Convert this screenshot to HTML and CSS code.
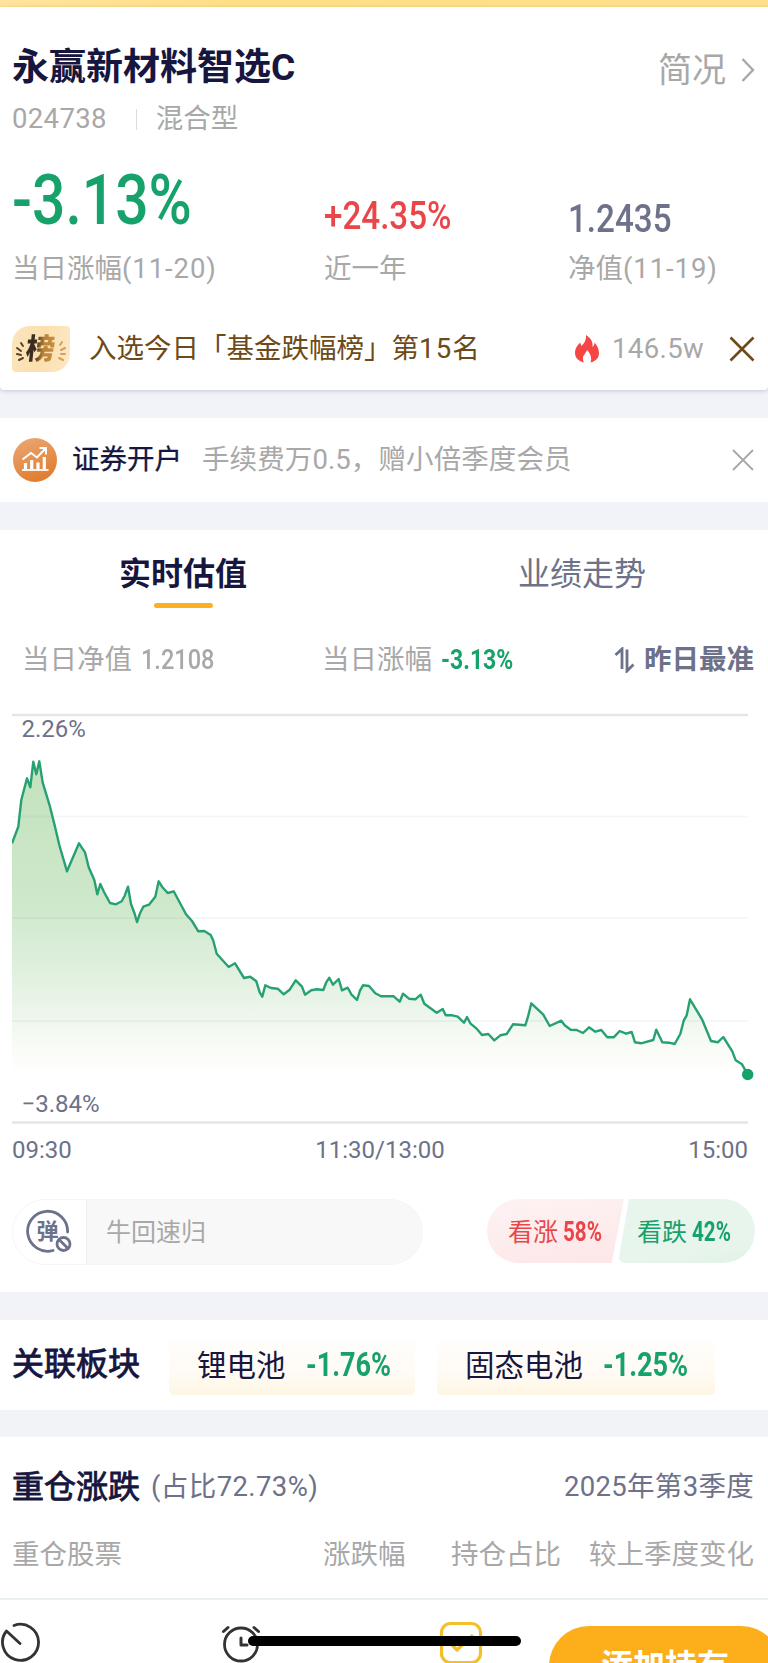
FILE: index.html
```html
<!DOCTYPE html>
<html lang="zh-CN">
<head>
    <meta charset="UTF-8">
    <meta name="viewport" content="width=device-width, initial-scale=1.0">
    <title>永赢新材料智选C</title>
    <link rel="stylesheet" href="styles.css">
</head>
<body>
    <div class="top-strip"></div>

    <section class="fund-header">
        <div class="title-row">
            <h1>永赢新材料智选C</h1>
            <a class="profile-link">简况
                <svg width="14" height="26" viewBox="0 0 14 26"><path d="M1.5 2 L12 13 L1.5 24"/></svg>
            </a>
        </div>
        <div class="meta-row">
            <span class="code">024738</span>
            <i class="meta-divider"></i>
            <span>混合型</span>
        </div>
        <div class="figures">
            <div class="figure">
                <div class="value big green"><span class="num">-3.13%</span></div>
                <div class="label">当日涨幅<span class="date">(11-20)</span></div>
            </div>
            <div class="figure">
                <div class="value red"><span class="num">+24.35%</span></div>
                <div class="label">近一年</div>
            </div>
            <div class="figure">
                <div class="value slate low"><span class="num">1.2435</span></div>
                <div class="label">净值<span class="date">(11-19)</span></div>
            </div>
        </div>
        <div class="rank-row">
            <div class="rank-badge">
                <svg width="58" height="46" viewBox="0 0 58 46">
                    <g fill="none" stroke-width="2" stroke-linecap="round">
                        <path stroke="#5a4128" d="M9 17 l2 3 M5 22 l4 3 M5 28 l4 1 M7 34 l4 -2"/>
                        <path stroke="#d3a05c" d="M50 16 l-2 3 M53 22 l-4 2 M53 28 l-4 0 M51 34 l-4 -2"/>
                    </g>
                </svg>
                <b>榜</b>
            </div>
            <span class="rank-text">入选今日「基金跌幅榜」第<span class="rank-no">15</span>名</span>
            <svg class="fire" width="24" height="28" viewBox="0 0 24 28">
                <path fill="#f54545" d="M11 0 C17 4 18 8 17.500 12 C19 11 19.500 9 19.500 7.500 C22 10 24 14 24 18 C24 23 20.500 26.500 15.500 27.500 C17 24 16 19 12 15 C11.500 18 7.500 20 8 24 C8 25.500 8.500 26.500 9 27.500 C4 26.500 0 23 0 18 C0 12 3.500 10 5 7.500 C6 9 6 10 6 11 C9 9 11.500 5 11 0 Z"/>
            </svg>
            <span class="heat">146.5w</span>
            <svg class="close-dark" width="26" height="26" viewBox="0 0 26 26"><path d="M1.500 1.500 L24.500 24.500 M24.500 1.500 L1.500 24.500"/></svg>
        </div>
    </section>

    <section class="broker-row">
        <svg width="44" height="44" viewBox="0 0 44 44">
            <defs>
                <linearGradient id="coin" x1="0.2" y1="0" x2="0.6" y2="1">
                    <stop offset="0" stop-color="#eba673"/>
                    <stop offset="1" stop-color="#e07c2d"/>
                </linearGradient>
            </defs>
            <circle cx="22" cy="22" r="22" fill="url(#coin)"/>
            <g fill="none" stroke="#fff">
                <path stroke-width="1.800" d="M9 32 H35.500"/>
                <path stroke-width="3.200" d="M12.500 31 V25 M18.700 31 V22 M25 31 V24.500 M31.300 31 V19"/>
                <path stroke-width="2" d="M9.500 21.500 L18 15 L24 19.500 L32.500 10.500 M26.500 10 H33 V16.500"/>
            </g>
        </svg>
        <span class="broker-name">证券开户</span>
        <span class="broker-desc">手续费万0.5，赠小倍季度会员</span>
        <svg class="close-light" width="22" height="22" viewBox="0 0 22 22"><path d="M1 1 L21 21 M21 1 L1 21"/></svg>
    </section>

    <section class="estimate">
        <div class="tabs">
            <div class="tab active">实时估值</div>
            <div class="tab">业绩走势</div>
        </div>
        <div class="stats">
            <div class="stat">当日净值 <span class="num">1.2108</span></div>
            <div class="stat">当日涨幅 <span class="num strong green">-3.13%</span></div>
            <div class="accuracy">
                <svg width="21" height="26" viewBox="0 0 21 26"><path d="M1.500 8 L8 2 V22 M13 2.500 V24 L19.500 17.500"/></svg>
                昨日最准
            </div>
        </div>
        <svg class="chart" width="744" height="416" viewBox="0 0 744 416">
            <defs>
                <linearGradient id="area" gradientUnits="userSpaceOnUse" x1="0" y1="50" x2="0" y2="364">
                    <stop offset="0" stop-color="#c3e2bd"/>
                    <stop offset="0.45" stop-color="#cde8ca"/>
                    <stop offset="0.75" stop-color="#e7f3e6"/>
                    <stop offset="0.9" stop-color="#f7fbf5"/>
                    <stop offset="1" stop-color="#ffffff"/>
                </linearGradient>
            </defs>
            <path fill="url(#area)" d="M0 364 L0 133.300 L6.300 116.700 L9.300 90 L15 68.300 L18.300 77.300 L21.300 51.700 L24.300 64.300 L27.300 51.300 L30.700 72.700 L38 96.700 L43 116.700 L47.300 135 L55 161.300 L67 133.300 L73 142.300 L76.700 157.300 L82.300 170 L85.300 184.300 L88.300 174 L92 182 L98 193 L104 194.300 L109.700 191.300 L112.700 185.700 L116 176.700 L119 194 L122.300 202.700 L125 212 L128 203.300 L131.300 196.700 L137 194.700 L143.300 186.700 L146.700 171.300 L150 176.700 L155.700 183 L161.700 181.300 L174 204.300 L180 211 L186.300 221.300 L192.300 221 L198.700 225 L201.300 230.700 L204.700 243.700 L216.700 257 L223 253.300 L232 268 L238.300 266.700 L244.300 271.300 L247.700 282.300 L250.300 286.700 L253.300 275.300 L259 278 L265.700 278.700 L271.700 284.300 L277.700 279.700 L283.700 270.300 L290 276.700 L293 284.700 L299.300 280.300 L304.700 279.300 L311.300 280 L314.300 272.300 L317.300 267.700 L321 274.700 L326.700 269 L330 280.300 L335.700 277.700 L339.300 284.300 L345 290 L348 280.700 L351 275.300 L357 276 L363.300 283.300 L369 286.300 L381.700 286.300 L387.700 291.700 L391 283.700 L397 288.700 L403.300 289.300 L408.700 284.700 L412.300 293.700 L424.700 302.700 L430.700 299 L433.700 305.300 L440.300 305.300 L445.700 306.700 L452 312.700 L455 307 L458.300 313.300 L464.300 318.300 L470 325 L476.300 324 L482.300 330.300 L488.300 325.300 L494.700 324 L501 314.300 L513.300 315.300 L516 306.700 L519.300 293.300 L531.300 304.700 L537.700 316 L549.300 310.700 L552.700 315.300 L558.700 319.700 L564.700 320 L571 323 L577 317.300 L583.300 321.700 L589.300 320 L595.300 327.300 L601.700 327.300 L607.700 321 L614 323.700 L619.700 322 L623 332.300 L629 333.300 L641.300 330 L644.300 319.700 L650.300 332.300 L657 332.700 L662.700 334 L668.300 324 L671.700 310.700 L674.700 305.300 L678 289.300 L690 309.300 L699 331 L705.700 332.300 L711.300 327 L720.300 341.300 L723.700 350.300 L730 354.300 L735.700 364 Z"/>
            <path class="grid edge" d="M0 5 H736 M0 412.500 H736"/>
            <path class="grid" d="M0 106.500 H736 M0 208 H736 M0 311 H736"/>
            <polyline class="line" points="0,133.300 6.300,116.700 9.300,90 15,68.300 18.300,77.300 21.300,51.700 24.300,64.300 27.300,51.300 30.700,72.700 38,96.700 43,116.700 47.300,135 55,161.300 67,133.300 73,142.300 76.700,157.300 82.300,170 85.300,184.300 88.300,174 92,182 98,193 104,194.300 109.700,191.300 112.700,185.700 116,176.700 119,194 122.300,202.700 125,212 128,203.300 131.300,196.700 137,194.700 143.300,186.700 146.700,171.300 150,176.700 155.700,183 161.700,181.300 174,204.300 180,211 186.300,221.300 192.300,221 198.700,225 201.300,230.700 204.700,243.700 216.700,257 223,253.300 232,268 238.300,266.700 244.300,271.300 247.700,282.300 250.300,286.700 253.300,275.300 259,278 265.700,278.700 271.700,284.300 277.700,279.700 283.700,270.300 290,276.700 293,284.700 299.300,280.300 304.700,279.300 311.300,280 314.300,272.300 317.300,267.700 321,274.700 326.700,269 330,280.300 335.700,277.700 339.300,284.300 345,290 348,280.700 351,275.300 357,276 363.300,283.300 369,286.300 381.700,286.300 387.700,291.700 391,283.700 397,288.700 403.300,289.300 408.700,284.700 412.300,293.700 424.700,302.700 430.700,299 433.700,305.300 440.300,305.300 445.700,306.700 452,312.700 455,307 458.300,313.300 464.300,318.300 470,325 476.300,324 482.300,330.300 488.300,325.300 494.700,324 501,314.300 513.300,315.300 516,306.700 519.300,293.300 531.300,304.700 537.700,316 549.300,310.700 552.700,315.300 558.700,319.700 564.700,320 571,323 577,317.300 583.300,321.700 589.300,320 595.300,327.300 601.700,327.300 607.700,321 614,323.700 619.700,322 623,332.300 629,333.300 641.300,330 644.300,319.700 650.300,332.300 657,332.700 662.700,334 668.300,324 671.700,310.700 674.700,305.300 678,289.300 690,309.300 699,331 705.700,332.300 711.300,327 720.300,341.300 723.700,350.300 730,354.300 735.700,364.300"/>
            <circle cx="735.700" cy="364.500" r="5.700" fill="#17a26b"/>
            <text x="9.500" y="27">2.26%</text>
            <text x="9.500" y="402">−3.84%</text>
        </svg>
        <div class="times">
            <span>09:30</span>
            <span>11:30/13:00</span>
            <span>15:00</span>
        </div>
        <div class="vote-row">
            <div class="danmaku">
                <div class="danmaku-toggle">
                    <svg width="50" height="46" viewBox="0 0 50 46">
                        <g fill="none" stroke="#6d7189" stroke-width="2.800" stroke-linecap="round">
                            <path d="M42.600 23 A20 20 0 1 0 28 41.500"/>
                            <circle cx="38.500" cy="35" r="6.500"/>
                            <path d="M34 30.500 L43 39.500"/>
                        </g>
                        <text x="11.500" y="30">弹</text>
                    </svg>
                </div>
                <span>牛回速归</span>
            </div>
            <div class="votes">
                <div class="vote up">看涨<span class="num strong">58%</span></div>
                <div class="vote down">看跌<span class="num strong">42%</span></div>
            </div>
        </div>
    </section>

    <section class="sectors">
        <h2>关联板块</h2>
        <div class="chip">锂电池<span class="num strong green">-1.76%</span></div>
        <div class="chip wide">固态电池<span class="num strong green">-1.25%</span></div>
    </section>

    <section class="holdings">
        <div class="holdings-title">
            <h2>重仓涨跌</h2>
            <span class="ratio">(占比72.73%)</span>
            <span class="quarter">2025年第3季度</span>
        </div>
        <div class="holdings-head">
            <span>重仓股票</span>
            <span>涨跌幅</span>
            <span>持仓占比</span>
            <span>较上季度变化</span>
        </div>
    </section>

    <footer class="bottom-bar">
        <svg class="bar-icons" width="540" height="64" viewBox="0 0 540 64">
            <g fill="none" stroke="#333" stroke-width="2.800" stroke-linecap="round" stroke-linejoin="round">
                <path d="M14 25.500 A18 18 0 1 1 6.500 31 L20 43.500"/>
                <circle cx="241" cy="44.500" r="16.500"/>
                <path stroke-width="3" d="M223.500 31.500 L228 27.500 M258.500 31.500 L254 27.500 M241 38 V45 H247"/>
            </g>
            <g fill="none" stroke="#f3c02c" stroke-width="3.200">
                <rect x="441.500" y="23.500" width="39" height="39" rx="9"/>
                <path d="M449 42 L457 50 L473 35"/>
            </g>
        </svg>
        <button class="add-btn">添加持有</button>
        <div class="home-indicator"></div>
    </footer>
</body>
</html>
```
FILE: styles.css
```css
:root {
    --ink: #16163f;
    --slate: #6d7189;
    --gray: #a8a8a8;
    --green: #17a26b;
    --red: #ea4649;
    --gap: #f2f3f9;
}

* {
    box-sizing: border-box;
}

body {
    margin: 0;
    width: 768px;
    height: 1663px;
    overflow: hidden;
    background: var(--gap);
    color: var(--gray);
    font-family: Roboto, "Noto Sans CJK SC", sans-serif;
    font-size: 27.5px;
    line-height: 40px;
    white-space: nowrap;
}

h1, h2 {
    margin: 0;
    color: var(--ink);
}

h2 {
    font-size: 32px;
    font-weight: 400;
    -webkit-text-stroke: 0.9px var(--ink);
}

svg {
    display: block;
    flex: none;
}

section {
    background: #fff;
}

/* Narrow figures */
.num {
    display: inline-block;
    font-weight: 500;
    transform: scaleX(0.84);
    transform-origin: left center;
}

.num.strong {
    font-weight: 700;
    transform: scaleX(0.82);
}

.green { color: var(--green); }
.red { color: var(--red); }
.slate { color: var(--slate); }

.top-strip {
    height: 7px;
    background: linear-gradient(90deg, #ffe49c, #ffdf86 30%, #ffe08a);
}

/* Fund header */
.fund-header {
    position: relative;
    height: 383px;
    padding: 34px 13px 0 12px;
    border-radius: 0 0 4px 4px;
    box-shadow: 0 1px 4px rgba(60, 65, 90, 0.25);
}

.title-row {
    display: flex;
    justify-content: space-between;
    height: 54px;
    line-height: 54px;
}

h1 {
    font-size: 37px;
    font-weight: 700;
    line-height: 54px;
}

.profile-link {
    display: flex;
    align-items: center;
    gap: 15px;
    font-size: 34px;
    padding-top: 3px;
}

.profile-link path {
    fill: none;
    stroke: var(--gray);
    stroke-width: 2.4;
}

.meta-row {
    display: flex;
    align-items: center;
    height: 40px;
    margin-top: 4px;
}

.code {
    letter-spacing: 0.35px;
}

.meta-divider {
    width: 1px;
    height: 21px;
    margin: 0 19px 0 29px;
    background: #ddd;
}

.figures {
    display: grid;
    grid-template-columns: 312px 244px 1fr;
    margin-top: 22px;
}

.value {
    height: 88px;
    padding-top: 32px;
    font-size: 39.5px;
    line-height: 46px;
}

.value.big {
    padding-top: 1px;
    font-size: 70px;
    line-height: 76px;
}

.value.low {
    padding-top: 35px;
}

.date {
    letter-spacing: 0.9px;
}

.rank-row {
    display: flex;
    align-items: center;
    height: 46px;
    margin-top: 37px;
}

.rank-badge {
    position: relative;
    width: 58px;
    height: 46px;
    border-radius: 18px 4px 18px 4px;
    background: linear-gradient(100deg, #fae6bd, #fbdfae 50%, #fde9c6);
}

.rank-badge b {
    position: absolute;
    left: 14px;
    top: 3px;
    font-size: 29px;
    font-weight: 900;
    transform: skewX(-6deg);
    background: linear-gradient(90deg, #3c2c20 30%, #b98235 60%, #c79045);
    -webkit-background-clip: text;
    color: transparent;
}

.rank-text {
    width: 486px;
    margin-left: 19px;
    color: #6d4a17;
}

.rank-no {
    letter-spacing: 1.2px;
}

.fire {
    margin-right: 13px;
}

.heat {
    flex: 1;
    letter-spacing: 0.4px;
}

.close-dark path {
    stroke: #6d4a17;
    stroke-width: 2.6;
}

/* Broker promotion */
.broker-row {
    display: flex;
    align-items: center;
    height: 84px;
    margin-top: 28px;
    padding: 0 14px 0 13px;
}

.broker-name {
    margin: 0 20px 0 15px;
    color: var(--ink);
    -webkit-text-stroke: 0.3px var(--ink);
}

.broker-desc {
    flex: 1;
    letter-spacing: 0.1px;
}

.close-light path {
    stroke: var(--gray);
    stroke-width: 1.8;
}

/* Realtime estimate */
.estimate {
    height: 762px;
    margin-top: 28px;
}

.tabs {
    display: flex;
    gap: 271px;
    padding: 19px 0 0 119px;
}

.tab {
    height: 59px;
    font-size: 32px;
    line-height: 50px;
    color: var(--slate);
}

.tab.active {
    font-weight: 700;
    color: var(--ink);
}

.tab.active::after {
    content: "";
    display: block;
    width: 59px;
    height: 5px;
    margin: 4px auto 0;
    border-radius: 3px;
    background: #fdb022;
}

.stats {
    display: grid;
    grid-template-columns: 300px 292px 1fr;
    height: 40px;
    margin: 32px 0 0 22px;
}

.stat .num {
    margin-left: 2px;
    font-size: 28px;
}

.accuracy {
    display: flex;
    align-items: center;
    gap: 9px;
    font-weight: 700;
    color: var(--slate);
}

.accuracy path {
    fill: none;
    stroke: var(--slate);
    stroke-width: 2.8;
}

.chart {
    margin: 30px 0 0 12px;
}

.chart text {
    font-size: 24px;
    fill: var(--slate);
}

.grid {
    stroke: rgba(90, 95, 105, 0.06);
    stroke-width: 2;
}

.grid.edge {
    stroke: #e6e6e9;
    stroke-width: 2.4;
}

.line {
    fill: none;
    stroke: #27a172;
    stroke-width: 2.4;
    stroke-linejoin: round;
}

.times {
    display: flex;
    justify-content: space-between;
    margin-top: 8px;
    padding: 0 20px 0 12px;
    font-size: 24px;
    line-height: 32px;
    color: var(--slate);
}

.vote-row {
    display: flex;
    justify-content: space-between;
    margin-top: 33px;
    padding: 0 13px 0 12px;
    font-size: 25px;
    line-height: 66px;
}

.danmaku {
    display: flex;
    width: 411px;
    height: 66px;
    border: 1px solid #f5f5f5;
    border-radius: 33px;
    background: #f8f8f8;
    overflow: hidden;
}

.danmaku-toggle {
    width: 74px;
    margin-right: 19px;
    padding: 9px 0 0 12px;
    border-right: 1px solid #f0f0f0;
    background: #fff;
}

.danmaku-toggle text {
    font-size: 22px;
    font-weight: 700;
    fill: var(--slate);
}

.votes {
    display: flex;
}

.vote {
    width: 137px;
    height: 64px;
    padding-left: 21px;
}

.vote .num {
    margin-left: 5px;
    font-size: 27.5px;
    transform: scaleX(0.75);
}

.vote.up {
    color: var(--red);
    border-radius: 32px 0 0 32px;
    background: linear-gradient(170deg, #fdf3f3, #fde6e8);
    clip-path: polygon(0 0, 100% 0, 91% 100%, 0 100%);
}

.vote.down {
    margin-left: -6px;
    padding-left: 19px;
    color: var(--green);
    border-radius: 8px 32px 32px 8px;
    background: linear-gradient(170deg, #e8f5ec, #e9f5ec 70%, #e1f2e6);
    clip-path: polygon(8% 0, 100% 0, 100% 100%, 0 100%);
}

/* Related sectors */
.sectors {
    display: flex;
    height: 90px;
    margin-top: 28px;
    padding: 19px 13px 0 12px;
}

.sectors h2 {
    width: 157px;
    line-height: 50px;
}

.chip {
    width: 246px;
    height: 56px;
    margin-right: 22px;
    padding-left: 28px;
    border-radius: 5px;
    background: linear-gradient(180deg, #fffefc, #fffbf4 60%, #fef6e4);
    font-size: 29.5px;
    line-height: 51px;
    color: var(--ink);
}

.chip.wide {
    width: 278px;
}

.chip .num {
    margin-left: 20px;
    font-size: 33px;
}

/* Holdings */
.holdings {
    height: 161px;
    margin-top: 27px;
    padding: 30px 14px 0 12px;
}

.holdings-title {
    display: flex;
    align-items: center;
    color: var(--slate);
}

.ratio {
    flex: 1;
    margin-left: 11px;
    letter-spacing: 0.4px;
}

.quarter {
    letter-spacing: 0.3px;
}

.holdings-head {
    display: grid;
    grid-template-columns: 311px 128px 138px 1fr;
    margin-top: 28px;
}

/* Bottom bar */
.bottom-bar {
    position: relative;
    display: flex;
    height: 65px;
    border-top: 2px solid #e9f1ef;
    background: #fff;
}

.add-btn {
    flex: none;
    width: 232px;
    height: 80px;
    margin: 26px 0 0 9px;
    padding: 0;
    border: none;
    border-radius: 40px;
    background: #fdae1b;
    color: #fff;
    font: 700 32px/72px Roboto, "Noto Sans CJK SC", sans-serif;
}

.home-indicator {
    position: absolute;
    left: 248px;
    top: 36px;
    width: 273px;
    height: 10px;
    border-radius: 5px;
    background: #000;
}
```
